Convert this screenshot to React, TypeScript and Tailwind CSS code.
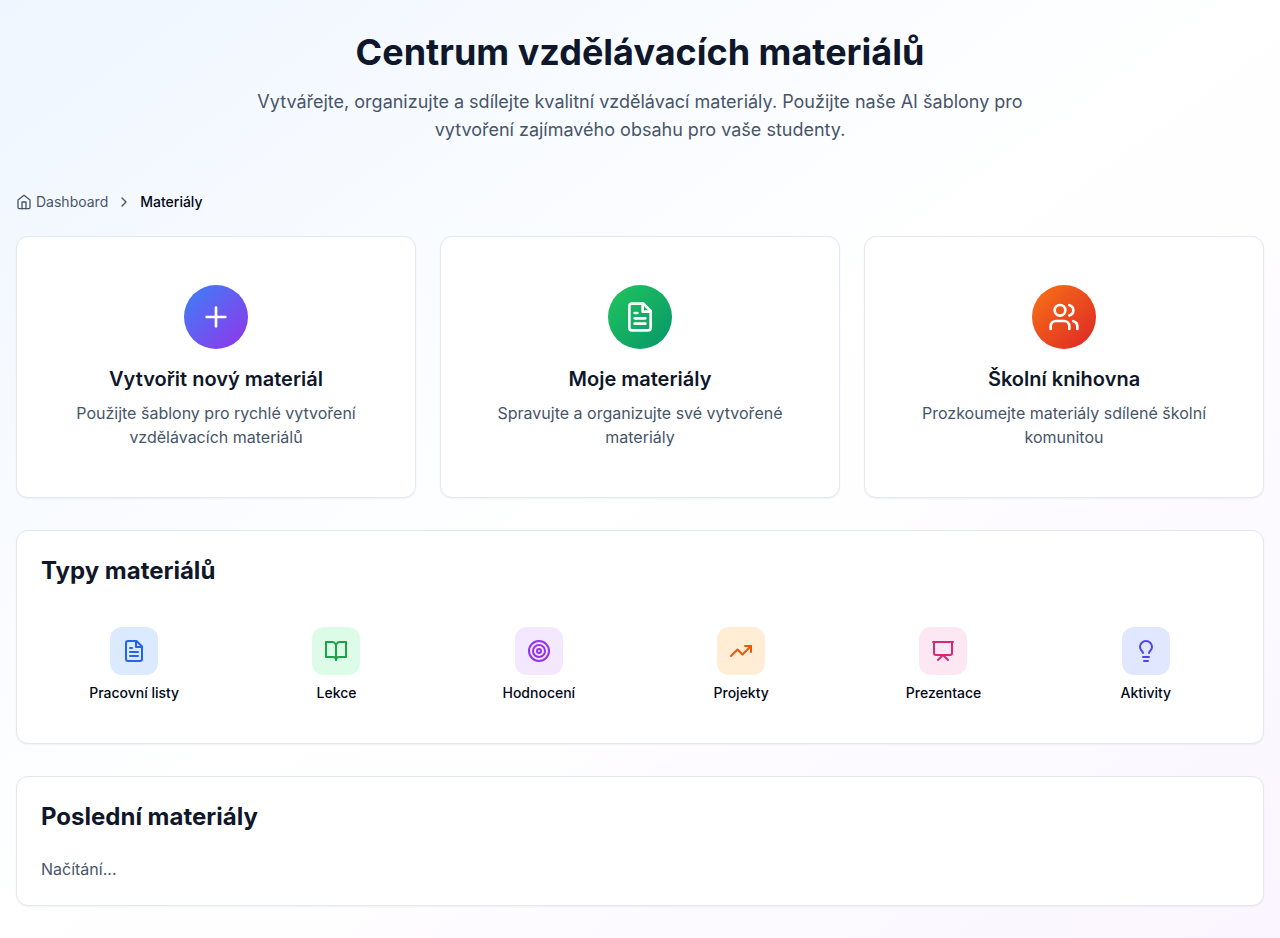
import type { ReactNode } from 'react';
import { ChevronRight, Lightbulb, Plus, Presentation, Target, TrendingUp, Users } from 'lucide-react';

type IconProps = { size?: number };

function Outline({ size = 24, children }: IconProps & { children: ReactNode }) {
  return (
    <svg width={size} height={size} viewBox="0 0 24 24" fill="none" stroke="currentColor" strokeWidth={2} strokeLinecap="round" strokeLinejoin="round">
      {children}
    </svg>
  );
}

function HomeIcon({ size }: IconProps) {
  return (
    <Outline size={size}>
      <path d="m3 9 9-7 9 7v11a2 2 0 0 1-2 2H5a2 2 0 0 1-2-2z" />
      <polyline points="9 22 9 12 15 12 15 22" />
    </Outline>
  );
}

function FileText({ size }: IconProps) {
  return (
    <Outline size={size}>
      <path d="M14.5 2H6a2 2 0 0 0-2 2v16a2 2 0 0 0 2 2h12a2 2 0 0 0 2-2V7.5L14.5 2z" />
      <polyline points="14 2 14 8 20 8" />
      <path d="M16 13H8M16 17H8M10 9H8" />
    </Outline>
  );
}

function BookOpen({ size }: IconProps) {
  return (
    <Outline size={size}>
      <path d="M2 3h6a4 4 0 0 1 4 4v14a3 3 0 0 0-3-3H2z" />
      <path d="M22 3h-6a4 4 0 0 0-4 4v14a3 3 0 0 1 3-3h7z" />
    </Outline>
  );
}

const actions = [
  { title: 'Vytvořit nový materiál', text: 'Použijte šablony pro rychlé vytvoření vzdělávacích materiálů', icon: Plus, color: 'from-[#3b82f6] to-[#9333ea]' },
  { title: 'Moje materiály', text: 'Spravujte a organizujte své vytvořené materiály', icon: FileText, color: 'from-[#22c55e] to-[#059669]' },
  { title: 'Školní knihovna', text: 'Prozkoumejte materiály sdílené školní komunitou', icon: Users, color: 'from-[#f97316] to-[#dc2626]' },
];

const types = [
  { name: 'Pracovní listy', icon: FileText, color: 'bg-[#dbeafe] text-[#2563eb]' },
  { name: 'Lekce', icon: BookOpen, color: 'bg-[#dcfce7] text-[#16a34a]' },
  { name: 'Hodnocení', icon: Target, color: 'bg-[#f3e8ff] text-[#9333ea]' },
  { name: 'Projekty', icon: TrendingUp, color: 'bg-[#ffedd5] text-[#ea580c]' },
  { name: 'Prezentace', icon: Presentation, color: 'bg-[#fce7f3] text-[#db2777]' },
  { name: 'Aktivity', icon: Lightbulb, color: 'bg-[#e0e7ff] text-[#4f46e5]' },
];

const card = 'rounded-xl border border-[#e2e8f0] bg-white shadow-xs';

export default function App() {
  return (
    <div className="min-h-screen bg-[linear-gradient(to_bottom_right,#eff6ff,#ffffff,#faf5ff)] px-4 py-8 font-['Inter',sans-serif] text-[#020817]">
      <header className="mb-12 text-center">
        <h1 className="mb-4 text-4xl font-bold text-[#0f172a]">Centrum vzdělávacích materiálů</h1>
        <p className="mx-auto max-w-3xl text-lg text-[#475569]">
          Vytvářejte, organizujte a sdílejte kvalitní vzdělávací materiály. Použijte naše AI šablony pro vytvoření zajímavého obsahu pro vaše studenty.
        </p>
      </header>
      <nav className="mb-6 flex items-center gap-2 text-sm text-[#475569]">
        <a className="flex items-center gap-1"><HomeIcon size={16} />Dashboard</a>
        <ChevronRight size={16} />
        <span className="font-medium text-[#020817]">Materiály</span>
      </nav>
      <section className="mb-8 grid grid-cols-3 gap-6">
        {actions.map(({ title, text, icon: Icon, color }) => (
          <article key={title} className={`${card} p-12 text-center`}>
            <div className={`mx-auto mb-4 flex size-16 items-center justify-center rounded-full bg-linear-to-br/srgb text-white ${color}`}>
              <Icon size={32} />
            </div>
            <h3 className="mb-2 text-xl font-semibold text-[#0f172a]">{title}</h3>
            <p className="text-[#475569]">{text}</p>
          </article>
        ))}
      </section>
      <section className={`${card} mb-8 p-6`}>
        <h2 className="mb-6 text-2xl font-bold text-[#0f172a]">Typy materiálů</h2>
        <div className="grid grid-cols-6 gap-4">
          {types.map(({ name, icon: Icon, color }) => (
            <div key={name} className="flex flex-col items-center p-4">
              <div className={`mb-2 flex size-12 items-center justify-center rounded-xl ${color}`}><Icon size={24} /></div>
              <span className="text-sm font-medium">{name}</span>
            </div>
          ))}
        </div>
      </section>
      <section className={`${card} p-6`}>
        <h2 className="mb-6 text-2xl font-bold text-[#0f172a]">Poslední materiály</h2>
        <p className="text-[#475569]">Načítání...</p>
      </section>
    </div>
  );
}
